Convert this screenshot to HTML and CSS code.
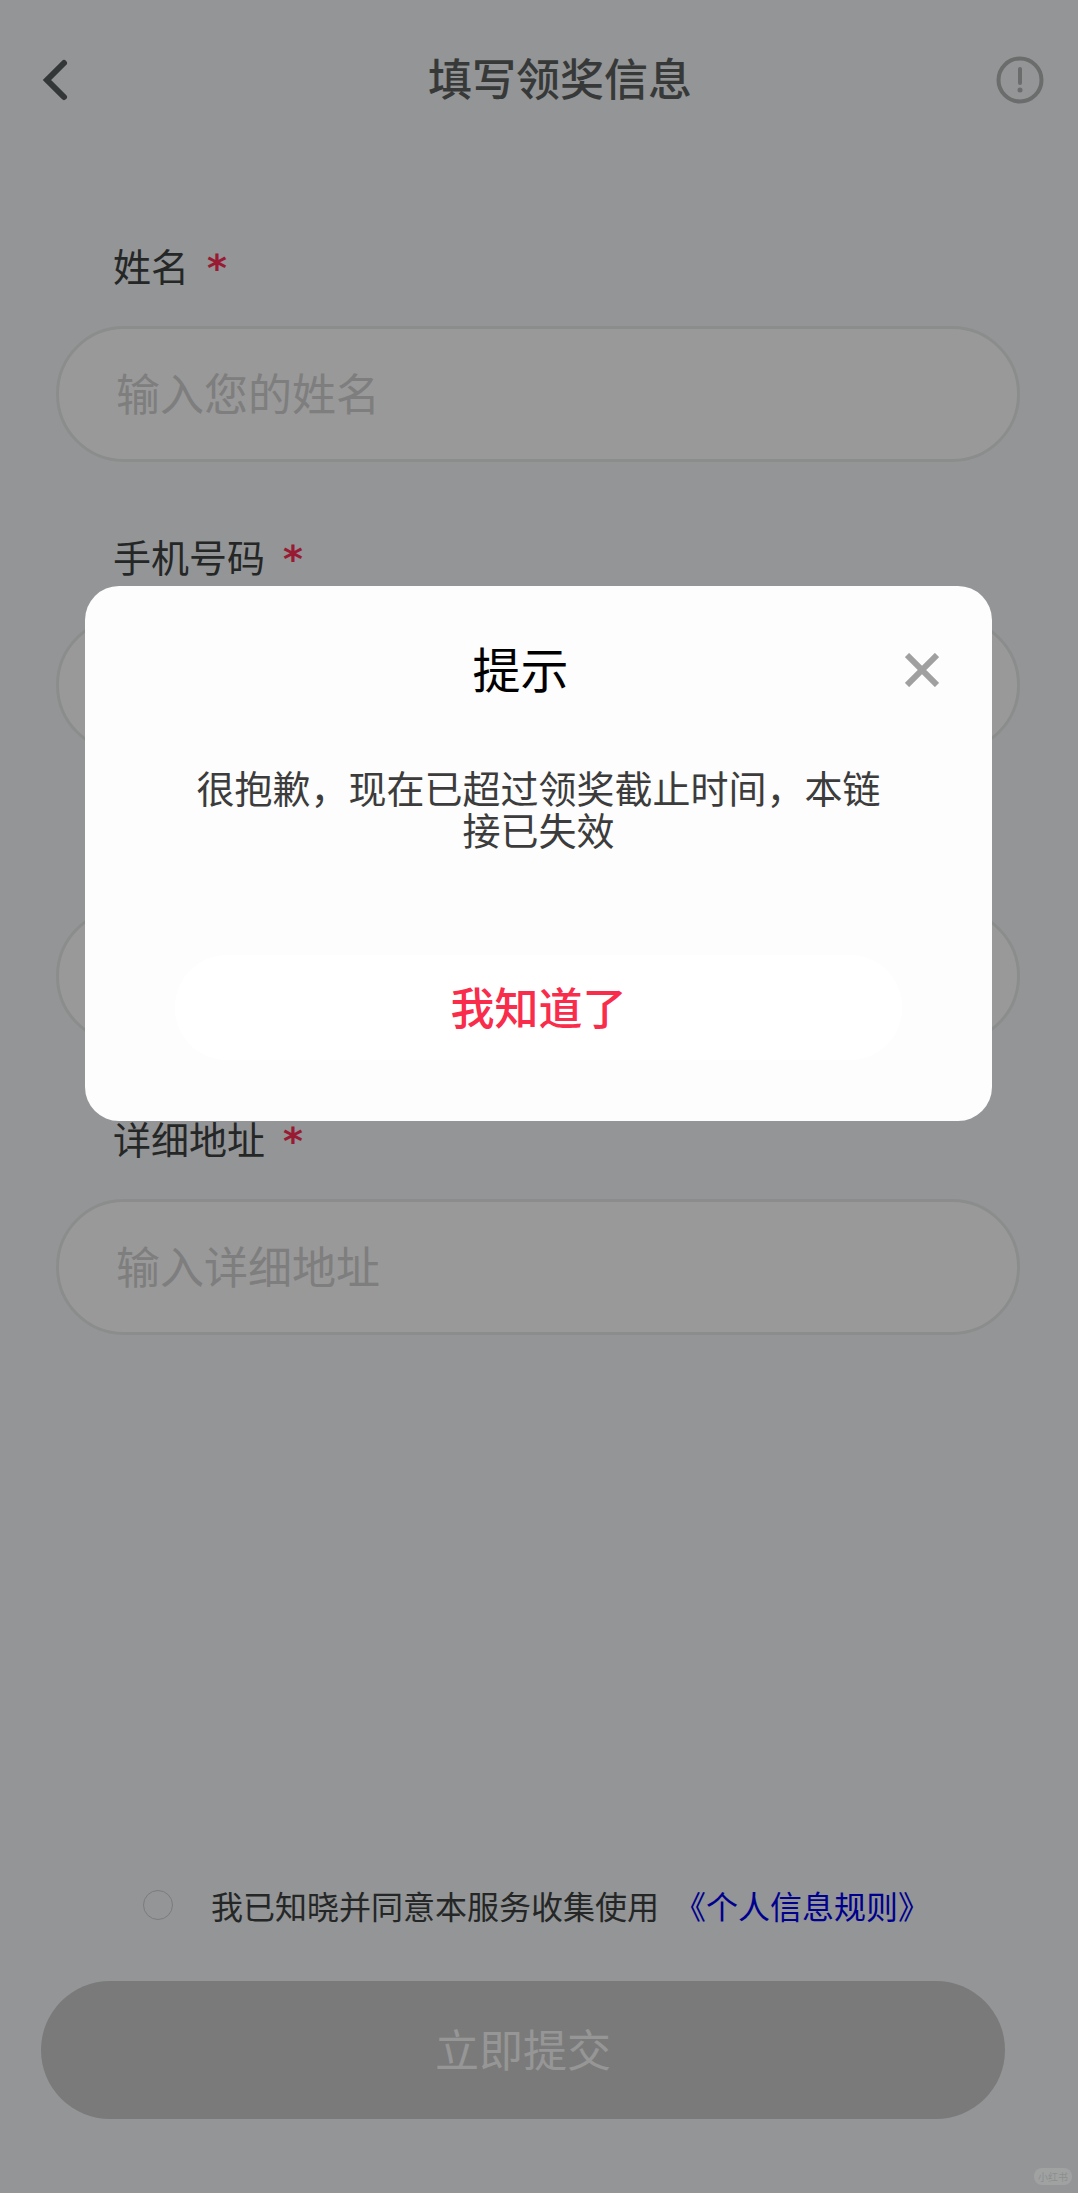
FILE: index.html
```html
<!doctype html>
<html lang="zh-CN">
	<head>
		<title>填写领奖信息</title>
		<meta charset="utf-8">
		<meta name="viewport" content="width=device-width">
		<link rel="stylesheet" href="styles.css">
	</head>
	<body>
		<div class="page">
			<header class="header">
				<button type="button" class="back" aria-label="返回">
					<svg width="36" height="44" viewBox="0 0 36 44">
						<path d="M30 5 L13 22 L30 39" />
					</svg>
				</button>
				<h1>填写领奖信息</h1>
				<button type="button" class="info" aria-label="说明">
					<svg width="48" height="48" viewBox="0 0 48 48">
						<circle class="ring" cx="24" cy="24" r="21.5" />
						<line x1="24" y1="13" x2="24" y2="27" />
						<circle class="dot" cx="24" cy="34" r="2.5" />
					</svg>
				</button>
			</header>
			<form class="form">
				<div class="fields">
					<div class="field">
						<label for="name">姓名<span class="required">*</span></label>
						<input type="text" id="name" placeholder="输入您的姓名">
					</div>
					<div class="field">
						<label for="phone">手机号码<span class="required">*</span></label>
						<input type="tel" id="phone">
					</div>
					<div class="field">
						<input type="text" id="area" aria-label="所在地区">
					</div>
					<div class="field">
						<label for="address">详细地址<span class="required">*</span></label>
						<input type="text" id="address" placeholder="输入详细地址">
					</div>
				</div>
				<div class="footer">
					<div class="agree">
						<input type="checkbox" id="agree">
						<label for="agree">我已知晓并同意本服务收集使用</label>
						<a href="#rules">《个人信息规则》</a>
					</div>
					<button type="submit" class="submit">立即提交</button>
				</div>
			</form>
			<div class="mask">
				<div class="dialog" role="dialog" aria-labelledby="dialog-title">
					<div class="dialog-header">
						<h2 id="dialog-title">提示</h2>
						<button type="button" class="close" aria-label="关闭">
							<svg width="34" height="34" viewBox="0 0 34 34">
								<path d="M2 2 L32 32 M32 2 L2 32" />
							</svg>
						</button>
					</div>
					<p>很抱歉，现在已超过领奖截止时间，本链接已失效</p>
					<button type="button" class="confirm">我知道了</button>
				</div>
				<span class="watermark">小红书</span>
			</div>
		</div>
	</body>
</html>
```
FILE: styles.css
```css
* {
	box-sizing: border-box;
	margin: 0;
	padding: 0;
}
body {
	background: #fff;
	font-family: "Noto Sans CJK SC", sans-serif;
}
button {
	padding-bottom: 4px;
	border: 0;
	background: none;
	font-family: inherit;
}
svg {
	display: block;
	fill: none;
}
.page {
	position: relative;
	display: flex;
	flex-direction: column;
	min-height: 100vh;
	margin-right: 2px;
	background: #f5f8fa;
}

/* top bar */
.header {
	display: flex;
	align-items: center;
	height: 160px;
	padding: 0 34px;
}
.header h1 {
	flex: 1;
	padding-bottom: 6px;
	color: #5c6060;
	font-size: 44px;
	font-weight: 500;
	line-height: 60px;
	text-align: center;
}
.back,
.info,
.close {
	padding: 0;
}
.back {
	width: 90px;
}
.back path {
	stroke: #585c5c;
	stroke-width: 6;
	stroke-linecap: round;
}
.info .ring,
.info line {
	stroke: #b2b4b4;
	stroke-width: 4;
	stroke-linecap: round;
}
.info .dot {
	fill: #b2b4b4;
}

/* form */
.form {
	flex: 1;
	display: flex;
	flex-direction: column;
	justify-content: space-between;
	padding-top: 77px;
}
.fields {
	display: flex;
	flex-direction: column;
	gap: 66px;
	padding: 0 58px 0 56px;
}
.field {
	display: flex;
	flex-direction: column;
	justify-content: flex-end;
	gap: 33px;
	min-height: 225px;
}
.field label {
	padding-left: 57px;
	color: #3e4242;
	font-size: 38px;
	line-height: 56px;
}
.required {
	margin-left: 18px;
	color: #ff2d55;
	font-family: "DejaVu Sans", sans-serif;
	font-weight: 700;
	line-height: 1;
}
.field input {
	width: 100%;
	height: 136px;
	padding: 0 57px 4px;
	border: 3px solid #e8ebe9;
	border-radius: 68px;
	background: #fff;
	font-family: inherit;
	font-size: 44px;
}
.field input::placeholder {
	color: #d2d2d2;
}
.footer {
	padding: 0 73px 74px 41px;
}
.agree {
	display: flex;
	align-items: center;
	height: 48px;
	margin: 0 0 52px 102px;
	color: #3e4242;
	font-size: 32px;
}
.agree input {
	width: 30px;
	height: 30px;
	margin-right: 38px;
	border: 1px solid #cdd0d0;
	border-radius: 50%;
	appearance: none;
}
.agree a {
	margin-left: 15px;
	color: #0000ee;
	text-decoration: none;
}
.submit {
	width: 100%;
	height: 138px;
	border-radius: 69px;
	background: #cbcbcb;
	color: #fafafa;
	font-size: 44px;
}

/* dialog */
.mask {
	position: absolute;
	inset: 0;
	padding: 586px 86px 0 85px;
	background: rgba(0, 0, 0, 0.4);
}
.dialog {
	padding: 54px 0 61px;
	border-radius: 34px;
	background: #fdfdfd;
}
.dialog-header {
	display: flex;
	align-items: center;
	height: 60px;
	padding: 0 53px 0 51px;
}
.dialog h2 {
	flex: 1;
	padding-bottom: 6px;
	color: #000;
	font-size: 48px;
	font-weight: 400;
	line-height: 60px;
	text-align: center;
}
.close path {
	stroke: #a0a0a0;
	stroke-width: 6;
}
.dialog p {
	margin: 66px 110px 105px;
	color: #3c3c3c;
	font-size: 38px;
	line-height: 42px;
	text-align: center;
}
.confirm {
	display: block;
	width: calc(100% - 180px);
	height: 105px;
	margin: 0 auto;
	border-radius: 52px;
	background: #fff;
	color: #f92c4b;
	font-size: 44px;
	font-weight: 500;
}
.watermark {
	position: absolute;
	right: 6px;
	bottom: 8px;
	padding: 0 4px;
	border-radius: 8px;
	background: #a0a2a2;
	color: #8c8e8e;
	font-size: 10px;
	line-height: 17px;
}
```
